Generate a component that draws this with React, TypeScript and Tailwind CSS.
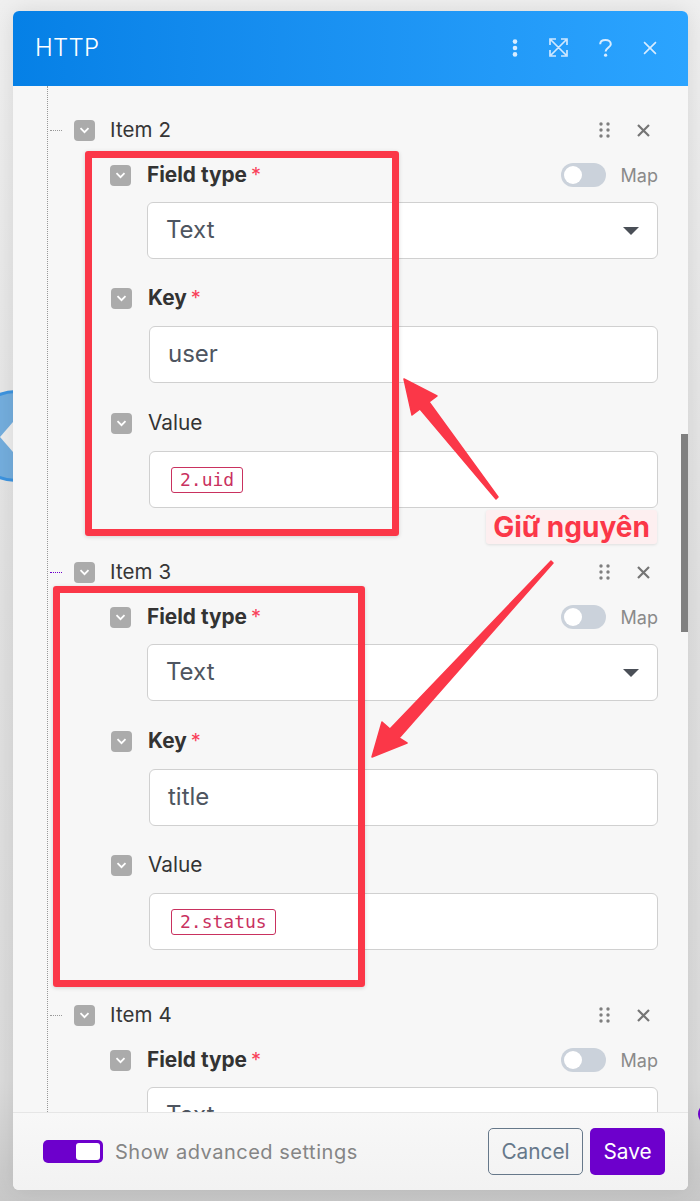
const FONT = "font-['Inter','Noto_Sans',sans-serif]";

function Chevron() {
  return (
    <div className="flex h-[21px] w-[21px] shrink-0 items-center justify-center rounded-[4px] bg-[#ababab]">
      <svg width="11" height="7" viewBox="0 0 11 7" fill="none" stroke="white" strokeWidth="1.8">
        <path d="M1.5 1.2 5.5 5.2 9.5 1.2" />
      </svg>
    </div>
  );
}

function Grip() {
  return (
    <svg width="11" height="16" viewBox="0 0 11 16" fill="#7f7f7f">
      {[2, 8, 14].map((y) => (
        <g key={y}>
          <circle cx="2" cy={y} r="1.7" />
          <circle cx="9" cy={y} r="1.7" />
        </g>
      ))}
    </svg>
  );
}

function SmallX({ color = "#757575", size = 13, width = 2.2 }: { color?: string; size?: number; width?: number }) {
  return (
    <svg width={size} height={size} viewBox="0 0 13 13" fill="none" stroke={color} strokeWidth={width}>
      <path d="M1 1 12 12M12 1 1 12" />
    </svg>
  );
}

function ItemRow({ label, connector }: { label: string; connector: string }) {
  return (
    <div className="relative flex h-[22px] items-center">
      <div className={`absolute left-[-24px] top-[11px] w-[12px] border-t border-dotted ${connector}`} />
      <Chevron />
      <span className="ml-[15px] flex-1 text-[20.5px] tracking-[0.1px] text-[#363636]">{label}</span>
      <Grip />
      <div className="ml-[27px] mr-[8px]">
        <SmallX />
      </div>
    </div>
  );
}

function Toggle() {
  return (
    <div className="flex h-6 w-[45px] items-center rounded-full bg-[#cbd2db] pl-[3px]">
      <div className="h-[18px] w-[18px] rounded-full bg-white" />
    </div>
  );
}

function FieldType() {
  return (
    <div className="mt-[22px] flex h-6 items-center">
      <Chevron />
      <span className="ml-[16px] text-[20.8px] font-bold text-[#333]">Field type</span>
      <span className="ml-[4px] mt-[-1px] text-[20px] text-[#f9405a]">*</span>
      <div className="ml-auto mr-[15px]">
        <Toggle />
      </div>
      <span className="text-[18px] text-[#8a8a8a]">Map</span>
    </div>
  );
}

function Select() {
  return (
    <div className="mt-[15px] ml-[37px] flex h-[57px] items-center justify-between rounded-[6px] border border-[#d0d0d0] bg-white pl-[18px] pr-[18px]">
      <span className="pb-[2px] text-[24px] text-[#4e5560]">Text</span>
      <div className="h-0 w-0 border-x-[8px] border-t-[8px] border-x-transparent border-t-[#4a4f57]" />
    </div>
  );
}

function LabelRow({ label, required, className }: { label: string; required?: boolean; className: string }) {
  return (
    <div className={`flex h-6 items-center pl-px ${className}`}>
      <Chevron />
      <span className={`ml-[16px] text-[20.8px] text-[#333] ${required ? "font-bold" : ""}`}>{label}</span>
      {required && <span className="ml-[4px] mt-[-1px] text-[20px] text-[#f9405a]">*</span>}
    </div>
  );
}

function TextInput({ value }: { value: string }) {
  return (
    <div className="mt-[16px] ml-[39px] flex h-[57px] items-center rounded-[6px] border border-[#d0d0d0] bg-white pl-[18px]">
      <span className="pb-[2px] text-[24px] text-[#4e5560]">{value}</span>
    </div>
  );
}

function PillInput({ value }: { value: string }) {
  return (
    <div className="mt-[16px] ml-[39px] flex h-[57px] items-center rounded-[6px] border border-[#d0d0d0] bg-white pl-[21px]">
      <span className="rounded-[3px] border border-[#c9315f] px-[8px] font-['DejaVu_Sans_Mono',monospace] text-[18px] leading-[24px] text-[#c9315f]">
        {value}
      </span>
    </div>
  );
}

function Item({
  n,
  keyName,
  value,
  className = "",
  keyGap = "mt-[27px]",
  valueGap = "mt-[28px]",
  connector = "border-[#999]",
}: {
  n: number;
  keyName: string;
  value: string;
  className?: string;
  keyGap?: string;
  valueGap?: string;
  connector?: string;
}) {
  return (
    <div className={className}>
      <ItemRow label={`Item ${n}`} connector={connector} />
      <div className="ml-[36px]">
        <FieldType />
        <Select />
        <LabelRow label="Key" required className={keyGap} />
        <TextInput value={keyName} />
        <LabelRow label="Value" className={valueGap} />
        <PillInput value={value} />
      </div>
    </div>
  );
}

export default function App() {
  return (
    <div className={`relative h-[1201px] w-[700px] overflow-hidden bg-[linear-gradient(#f0f0f0,#e2e2e2_50%,#dcdcdc_90%,#c8c8c8)] ${FONT}`}>
      {/* node behind the dialog */}
      <div className="absolute left-[-30px] top-[390px] h-[92px] w-[92px] rounded-full border-[3px] border-[#3d94e0] bg-[#74aede]" />
      <svg className="absolute left-0 top-[420px]" width="13" height="34" viewBox="0 0 13 34" fill="#eeeeee">
        <path d="M0 17 13 2V32Z" />
      </svg>
      <div className="absolute left-[698px] top-[1103px] h-[22px] w-[22px] rounded-full bg-[#6d00cc]" />

      <div className="absolute left-[13px] top-[11px] flex h-[1179px] w-[675px] flex-col overflow-hidden rounded-[6px] bg-[#f7f7f7] shadow-[0_0_24px_rgba(0,0,0,0.1)]">
        <header className="flex h-[75px] shrink-0 items-center bg-gradient-to-r from-[#0580e6] to-[#2ba4ff] pb-[2px] pl-[22px] pr-[31px] text-white">
          <h1 className="flex-1 text-[24px] font-light tracking-[0.2px]">HTTP</h1>
          <svg width="6" height="18" viewBox="0 0 6 18" fill="#d7ecff">
            <circle cx="3" cy="2.6" r="2.3" />
            <circle cx="3" cy="9" r="2.3" />
            <circle cx="3" cy="15.4" r="2.3" />
          </svg>
          <svg className="ml-[31px]" width="19" height="19" viewBox="0 0 19 19" fill="none" stroke="#cfe8ff" strokeWidth="1.7">
            <path d="M1 7V1h6M12 1h6v6M18 12v6h-6M7 18H1v-6M2 2l15 15M17 2 2 17" />
          </svg>
          <svg className="ml-[31px]" width="13" height="18" viewBox="0 0 13 18" fill="none" stroke="#d7ecff" strokeWidth="2">
            <path d="M1.2 5.2C1.2 2.6 3.4 1 6.5 1c3 0 5.3 1.7 5.3 4.2 0 3.2-5 3.4-5.2 7.3" />
            <circle cx="6.6" cy="16.2" r="1.6" fill="#d7ecff" stroke="none" />
          </svg>
          <div className="ml-[31px]">
            <SmallX color="#d7ecff" size={14} width={1.5} />
          </div>
        </header>

        <div className="relative min-h-0 flex-1 overflow-hidden pl-[61px] pr-[30px] pt-[33px]">
          <div className="absolute bottom-0 left-[34px] top-0 border-l border-dotted border-[#999]" />
          <div className="absolute right-0 top-[348px] h-[198px] w-[7px] bg-[#808080]" />
          <Item n={2} keyName="user" value="2.uid" />
          <Item
            n={3}
            keyName="title"
            value="2.status"
            className="mt-[53px]"
            keyGap="mt-[28px]"
            valueGap="mt-[27px]"
            connector="border-[#6d00cc]"
          />
          <Item n={4} keyName="" value="" className="mt-[54px]" />
        </div>

        <footer className="flex h-[78px] shrink-0 items-center border-t border-[#e6e6e6] bg-gradient-to-b from-[#f8f8f8] to-[#f2f2f2] pl-[30px] pr-[23px]">
          <div className="flex h-[23px] w-[60px] items-center justify-end rounded-[5px] bg-[#6d00cc] pr-[3px]">
            <div className="h-[17px] w-[24px] rounded-[3px] bg-white" />
          </div>
          <span className="ml-[12px] flex-1 text-[20px] tracking-[0.52px] text-[#858585]">Show advanced settings</span>
          <button className="h-[47px] w-[95px] rounded-[5px] border border-[#66788a] text-[20.8px] text-[#66788a]">Cancel</button>
          <button className="ml-[7px] h-[47px] w-[75px] rounded-[5px] bg-[#6d00cc] text-[20.8px] text-white">Save</button>
        </footer>
      </div>

      {/* screenshot annotations */}
      <div className="absolute left-[85px] top-[151px] h-[385px] w-[314px] rounded-[3px] border-[7px] border-[#fb3748] shadow-[0_1px_4px_rgba(0,0,0,0.15)]" />
      <div className="absolute left-[53px] top-[586px] h-[401px] w-[312px] rounded-[3px] border-[7px] border-[#fb3748] shadow-[0_1px_4px_rgba(0,0,0,0.15)]" />
      <svg className="absolute left-0 top-0" width="700" height="1201" viewBox="0 0 700 1201" fill="#fb3748">
        <path d="M404 379 437 396 429 402 498 497 496 499 420 409 412 415Z" stroke="#fb3748" strokeLinejoin="round" strokeWidth="1.5" />
        <path d="M551 561 553 563 399 738 407 743 372 757 382 722 390 729Z" stroke="#fb3748" strokeLinejoin="round" strokeWidth="1.5" />
      </svg>
      <div className="absolute left-[486px] top-[510px] flex h-[34px] w-[171px] items-center justify-center rounded-[3px] bg-[#fdeff0] text-[28px] font-bold leading-none text-[#fb3748] shadow-[0_1px_3px_rgba(0,0,0,0.1)]">
        Giữ nguyên
      </div>
    </div>
  );
}
